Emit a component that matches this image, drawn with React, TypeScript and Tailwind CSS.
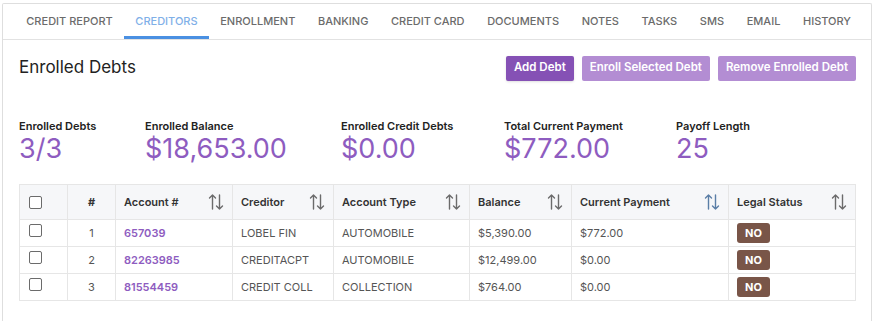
import React from 'react';

const tabs = ['CREDIT REPORT', 'CREDITORS', 'ENROLLMENT', 'BANKING', 'CREDIT CARD', 'DOCUMENTS', 'NOTES', 'TASKS', 'SMS', 'EMAIL', 'HISTORY'];

const stats = [
  { label: 'Enrolled Debts', value: '3/3', w: 'w-[126px]' },
  { label: 'Enrolled Balance', value: '$18,653.00', w: 'w-[196px]' },
  { label: 'Enrolled Credit Debts', value: '$0.00', w: 'w-[163px]' },
  { label: 'Total Current Payment', value: '$772.00', w: 'w-[172px]' },
  { label: 'Payoff Length', value: '25', w: 'w-[120px]' },
];

const rows = [
  { n: 1, acct: '657039', creditor: 'LOBEL FIN', type: 'AUTOMOBILE', bal: '$5,390.00', pay: '$772.00' },
  { n: 2, acct: '82263985', creditor: 'CREDITACPT', type: 'AUTOMOBILE', bal: '$12,499.00', pay: '$0.00' },
  { n: 3, acct: '81554459', creditor: 'CREDIT COLL', type: 'COLLECTION', bal: '$764.00', pay: '$0.00' },
];

function SortIcon({ blue }: { blue?: boolean }) {
  const c = blue ? '#5a7ea6' : '#6b6b6b';
  return (
    <svg width="16" height="18" viewBox="0 0 16 18" fill="none" stroke={c} strokeWidth="1.4" strokeLinecap="round" strokeLinejoin="round">
      <path d="M4.5 16V2M1.5 5l3-3 3 3" />
      <path d="M11.5 2v14M8.5 13l3 3 3-3" />
    </svg>
  );
}

function Checkbox() {
  return <div className="w-[13px] h-[13px] rounded-[2px] border border-[#6b6b6b] bg-white" />;
}

export default function App() {
  return (
    <div className="w-[874px] h-[321px] bg-white pt-[3px] pl-[2px] pr-[2px] font-['Inter',sans-serif]">
      <div className="h-full border-l border-r border-t border-[#dedede] rounded-t-[2px]">
        {/* Tabs */}
        <div className="flex h-[36px] border-b border-[#e2e2e2] pl-[12px] whitespace-nowrap">
          {tabs.map((t) => (
            <div
              key={t}
              className={`px-[11.3px] flex items-center text-[11px] font-medium ${
                t === 'CREDITORS'
                  ? 'text-[#7fb0e8] border-b-[3px] border-[#4a90e2] pt-[3px]'
                  : 'text-[#6b6b6b]'
              }`}
            >
              {t}
            </div>
          ))}
        </div>

        <div className="pl-[16px] pr-[15px]">
          {/* Header */}
          <div className="flex items-center justify-between mt-[15px] h-[26px]">
            <div className="text-[17px] text-[#222]">Enrolled Debts</div>
            <div className="flex gap-[8px]">
              <button className="h-[25px] px-[8px] rounded-[2px] bg-[#8551b5] text-white text-[11.5px] font-semibold shadow-sm">Add Debt</button>
              <button className="h-[25px] px-[8px] rounded-[2px] bg-[#b38dd3] text-white text-[11.5px] font-semibold">Enroll Selected Debt</button>
              <button className="h-[25px] px-[8px] rounded-[2px] bg-[#b38dd3] text-white text-[11.5px] font-semibold">Remove Enrolled Debt</button>
            </div>
          </div>

          {/* Stats */}
          <div className="flex mt-[38px]">
            {stats.map((s) => (
              <div key={s.label} className={s.w}>
                <div className="text-[11px] font-semibold text-[#222] leading-[14px]">{s.label}</div>
                <div className="text-[27px] text-[#8e5cc0] leading-[32px]">{s.value}</div>
              </div>
            ))}
          </div>

          {/* Table */}
          <table className="mt-[19px] w-[836px] border-collapse text-[11px] table-fixed">
            <colgroup>
              <col className="w-[48px]" />
              <col className="w-[48px]" />
              <col className="w-[117px]" />
              <col className="w-[101px]" />
              <col className="w-[136px]" />
              <col className="w-[102px]" />
              <col className="w-[157px]" />
              <col className="w-[127px]" />
            </colgroup>
            <thead>
              <tr className="bg-[#f6f7f9] h-[35px] text-[#333] font-semibold">
                <th className="border border-[#e6e6e6] px-[9px] text-left align-middle"><Checkbox /></th>
                <th className="border border-[#e6e6e6] text-center">#</th>
                {['Account #', 'Creditor', 'Account Type', 'Balance', 'Current Payment', 'Legal Status'].map((h) => (
                  <th key={h} className="border border-[#e6e6e6] pl-[8px] pr-[8px] font-semibold">
                    <div className="flex items-center justify-between">
                      <span>{h}</span>
                      <SortIcon blue={h === 'Current Payment'} />
                    </div>
                  </th>
                ))}
              </tr>
            </thead>
            <tbody>
              {rows.map((r) => (
                <tr key={r.n} className="h-[27px] text-[#555]">
                  <td className="border border-[#e6e6e6] px-[9px] align-top pt-[4px]"><Checkbox /></td>
                  <td className="border border-[#e6e6e6] text-center">{r.n}</td>
                  <td className="border border-[#e6e6e6] pl-[8px] font-semibold text-[#8e5cc0]">{r.acct}</td>
                  <td className="border border-[#e6e6e6] pl-[8px]">{r.creditor}</td>
                  <td className="border border-[#e6e6e6] pl-[8px]">{r.type}</td>
                  <td className="border border-[#e6e6e6] pl-[8px]">{r.bal}</td>
                  <td className="border border-[#e6e6e6] pl-[8px]">{r.pay}</td>
                  <td className="border border-[#e6e6e6] pl-[8px]">
                    <span className="inline-flex items-center justify-center w-[33px] h-[20px] rounded-[3px] bg-[#795548] text-white text-[11px] font-bold">NO</span>
                  </td>
                </tr>
              ))}
            </tbody>
          </table>
        </div>
      </div>
    </div>
  );
}
